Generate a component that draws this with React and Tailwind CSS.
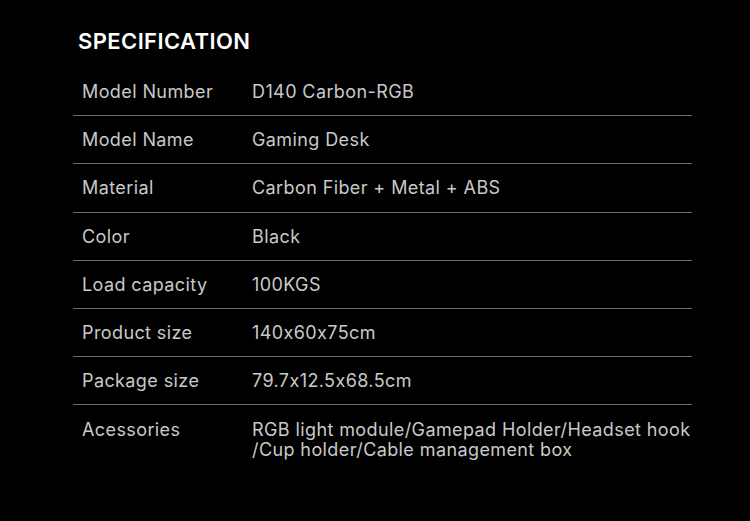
const rows = [
  ['Model Number', 'D140 Carbon-RGB'],
  ['Model Name', 'Gaming Desk'],
  ['Material', 'Carbon Fiber + Metal + ABS'],
  ['Color', 'Black'],
  ['Load capacity', '100KGS'],
  ['Product size', '140x60x75cm'],
  ['Package size', '79.7x12.5x68.5cm'],
];

export default function App() {
  return (
    <div
      className="w-[750px] h-[521px] bg-black text-[#c9c9c9] overflow-hidden [font-feature-settings:'calt'_0]"
      style={{ fontFamily: 'Inter, "Open Sans", sans-serif' }}
    >
      <div className="pl-[73px] pt-[27px]">
        <h1 className="pl-[5px] text-[22px] leading-[28px] font-semibold tracking-[0.4px] text-white">
          SPECIFICATION
        </h1>
        <div className="w-[619px] mt-[13px]">
          {rows.map(([label, value]) => (
            <div
              key={label}
              className="flex items-center h-[48.2px] border-b border-[#6b6b6b] text-[18px] tracking-[0.4px]"
            >
              <div className="w-[179px] pl-[9px]">{label}</div>
              <div>{value}</div>
            </div>
          ))}
          <div className="flex pt-[15px] text-[18px] leading-[20px] tracking-[0.4px]">
            <div className="w-[179px] pl-[9px]">Acessories</div>
            <div className="whitespace-nowrap">
              RGB light module/Gamepad Holder/Headset hook
              <br />
              /Cup holder/Cable management box
            </div>
          </div>
        </div>
      </div>
    </div>
  );
}
